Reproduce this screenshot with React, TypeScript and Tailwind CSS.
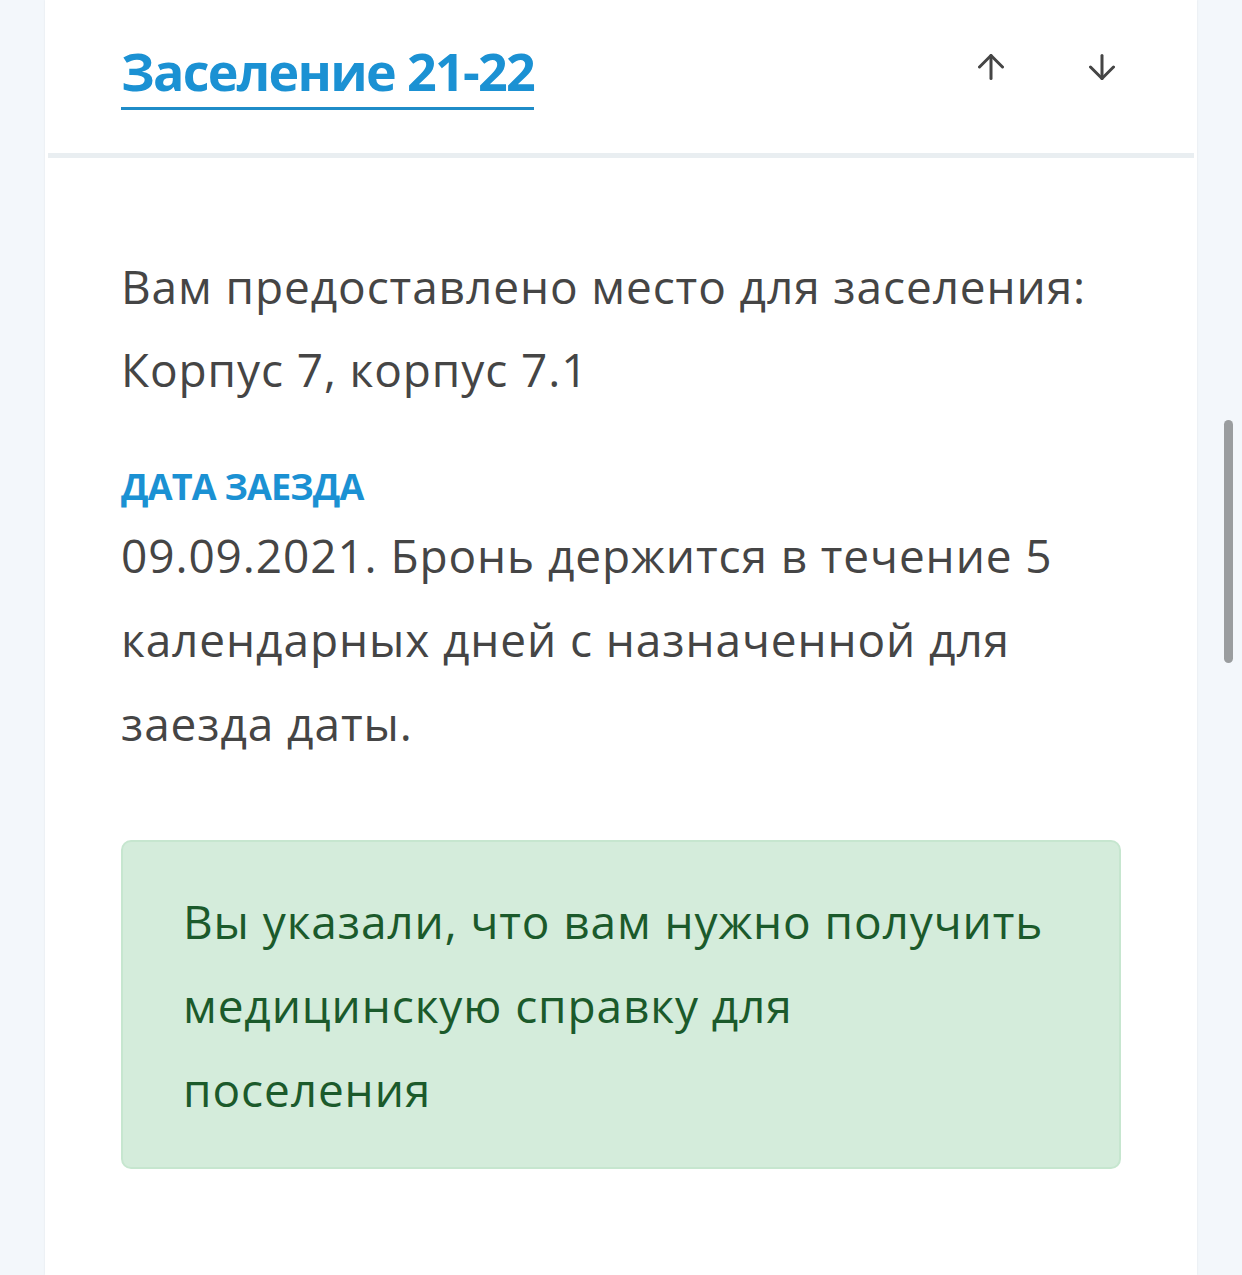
import React from "react";

// стрелка вверх / вниз для сортировки блока
const Arrow = ({ down }: { down?: boolean }) => (
    <svg
        width="26"
        height="26"
        viewBox="0 0 26 26"
        fill="none"
        stroke="#454545"
        strokeWidth="3"
        strokeLinecap="round"
        strokeLinejoin="round"
        className={down ? "rotate-180" : ""}>
        <path d="M13 24.5V1.5" />
        <path d="M1.5 13 13 1.5 24.5 13" />
    </svg>
);

export default function App() {
    return (
        <div className="relative min-h-[1275px] bg-[#f3f7fb] font-['Open_Sans',sans-serif]">
            <div className="mx-[45px] min-h-[1275px] bg-white shadow-[0_0_2px_rgba(0,0,0,0.08)]">
                {/* HEADER */}
                <header className="flex items-start justify-between h-[153px] pl-[76px] pr-[82px]">
                    <h1 className="mt-[35px] border-b-[3px] border-[#1f8cc8] text-[52px] font-bold leading-[72px] tracking-[-1.7px] text-[#1b91d3]">
                        Заселение 21-22
                    </h1>
                    <div className="mt-[54px] flex gap-[85px]">
                        <Arrow />
                        <Arrow down />
                    </div>
                </header>
                <div className="mx-[3px] h-[5px] bg-[#e9eef1]" />

                {/* CONTENT */}
                <section className="px-[76px] pt-[87px] pb-[100px] text-[#454545]">
                    <p className="text-[46px] leading-[83px] tracking-[0.9px]">
                        Вам предоставлено место для заселения: Корпус 7, корпус 7.1
                    </p>
                    <h2 className="mt-[50px] text-[36px] font-bold leading-[52px] tracking-[-0.8px] uppercase text-[#1b91d3]">
                        Дата заезда
                    </h2>
                    <p className="text-[46px] leading-[84px] tracking-[0.9px]">
                        09.09.2021. Бронь держится в течение 5 календарных дней с назначенной для заезда даты.
                    </p>

                    <div className="mt-[75px] rounded-[10px] border-2 border-[#c6e6cf] bg-[#d4ecdb] pl-[60px] pr-[72px] pt-[37px] pb-[36px]">
                        <p className="text-[46px] leading-[84px] tracking-[0.9px] text-[#1b5a2b]">
                            Вы указали, что вам нужно получить медицинскую справку для поселения
                        </p>
                    </div>
                </section>
            </div>

            {/* полоса прокрутки */}
            <div className="absolute top-[420px] right-[9px] h-[243px] w-[9px] rounded-full bg-[#9a9d9f]" />
        </div>
    );
}
